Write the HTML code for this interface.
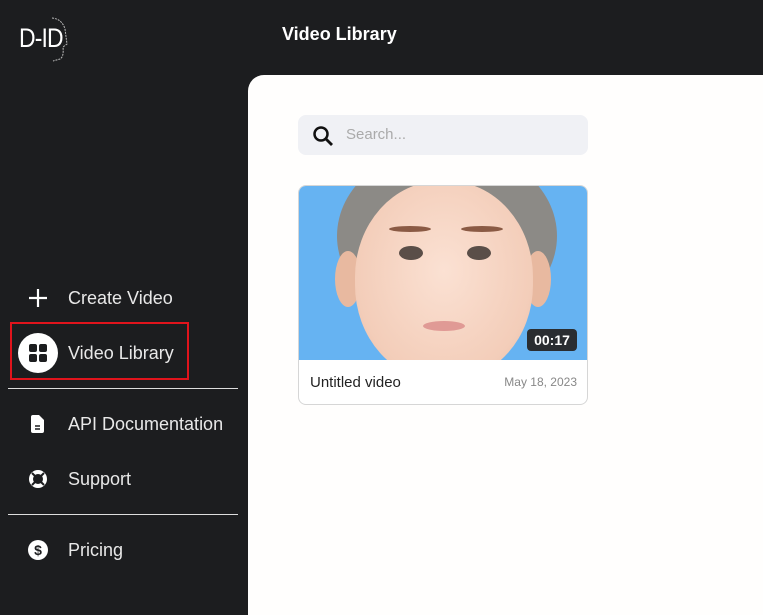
<!DOCTYPE html>
<html><head><style>
body{margin:0;width:763px;height:604px;background:#1c1d1f;font-family:"Liberation Sans",sans-serif;position:relative;overflow:hidden}
.t{position:absolute;color:#fff}
.nav{position:absolute;left:68px;color:#e8e8e8;font-size:18px}
.ic{position:absolute}
</style></head><body>
<div class="t" style="left:19px;top:23px;font-size:27px;font-family:'Liberation Sans Narrow','Liberation Sans',sans-serif;transform:scaleX(0.85);transform-origin:left;letter-spacing:-1px">D-ID</div>
<svg class="ic" style="left:50px;top:17px" width="22" height="46"><path d="M2 1 Q12 2 15 12 L17 27 L13 30 Q14 40 10 42 L3 44" fill="none" stroke="#bbb" stroke-width="1" stroke-dasharray="2 1"/></svg>
<div class="t" style="left:282px;top:24px;font-size:18px;font-weight:bold">Video Library</div>
<div style="position:absolute;left:248px;top:75px;width:520px;height:540px;background:#fffefd;border-top-left-radius:16px"></div>
<div style="position:absolute;left:298px;top:115px;width:290px;height:40px;background:#f0f1f5;border-radius:8px"></div>
<svg class="ic" style="left:311px;top:124px" width="24" height="24"><circle cx="10" cy="10" r="6.5" fill="none" stroke="#111" stroke-width="2.5"/><path d="M15 15 L21 21" stroke="#111" stroke-width="2.8"/></svg>
<div style="position:absolute;left:346px;top:126px;font-size:15px;color:#aaa">Search...</div>
<div style="position:absolute;left:298px;top:185px;width:288px;height:218px;border:1px solid #d6d6d6;border-radius:8px;overflow:hidden;background:#fff">
 <div style="position:absolute;left:0;top:0;width:288px;height:174px;background:#66b3f2;overflow:hidden">
  <div style="position:absolute;left:38px;top:-40px;width:220px;height:180px;border-radius:50%;background:#8c8a86"></div>
  <div style="position:absolute;left:36px;top:65px;width:26px;height:56px;border-radius:50%;background:#e8b9a0"></div>
  <div style="position:absolute;left:226px;top:65px;width:26px;height:56px;border-radius:50%;background:#e8b9a0"></div>
  <div style="position:absolute;left:56px;top:-5px;width:178px;height:200px;border-radius:48%;background:radial-gradient(ellipse at 50% 45%,#fbe1d3,#f3cdb9 70%,#e6b39c)"></div>
  <div style="position:absolute;left:100px;top:60px;width:24px;height:14px;border-radius:50%;background:#5a4e48"></div>
  <div style="position:absolute;left:168px;top:60px;width:24px;height:14px;border-radius:50%;background:#5a4e48"></div>
  <div style="position:absolute;left:90px;top:40px;width:42px;height:6px;border-radius:50%;background:#8a5a44"></div>
  <div style="position:absolute;left:162px;top:40px;width:42px;height:6px;border-radius:50%;background:#8a5a44"></div>
  <div style="position:absolute;left:124px;top:135px;width:42px;height:10px;border-radius:50%;background:#e09a95"></div>
  <div style="position:absolute;left:228px;top:143px;width:50px;height:22px;border-radius:4px;background:#2a2d31;color:#fff;font-weight:bold;font-size:14px;text-align:center;line-height:22px">00:17</div>
 </div>
 <div style="position:absolute;left:11px;top:188px;font-size:15px;color:#222">Untitled video</div>
 <div style="position:absolute;right:10px;top:189px;font-size:12px;color:#888">May 18, 2023</div>
</div>
<svg class="ic" style="left:27px;top:287px" width="22" height="22"><path d="M11 2V20M2 11H20" stroke="#fff" stroke-width="2.2"/></svg>
<div class="nav" style="top:288px">Create Video</div>
<div style="position:absolute;left:10px;top:322px;width:175px;height:54px;border:2px solid #e0141c"></div>
<div style="position:absolute;left:18px;top:333px;width:40px;height:40px;border-radius:50%;background:#fff"></div>
<svg class="ic" style="left:29px;top:344px" width="18" height="18"><rect x="0" y="0" width="8" height="8" rx="2" fill="#1c1d1f"/><rect x="10" y="0" width="8" height="8" rx="2" fill="#1c1d1f"/><rect x="0" y="10" width="8" height="8" rx="2" fill="#1c1d1f"/><rect x="10" y="10" width="8" height="8" rx="2" fill="#1c1d1f"/></svg>
<div class="nav" style="top:343px">Video Library</div>
<div style="position:absolute;left:8px;top:388px;width:230px;height:1px;background:#ddd"></div>
<svg class="ic" style="left:31px;top:415px" width="14" height="18"><path d="M0 2Q0 0 2 0H8L13 5V16Q13 18 11 18H2Q0 18 0 16Z" fill="#fff"/><path d="M4 11H9M4 14H9" stroke="#1c1d1f" stroke-width="1.5"/></svg>
<div class="nav" style="top:414px">API Documentation</div>
<svg class="ic" style="left:28px;top:469px" width="20" height="20"><circle cx="10" cy="10" r="7" fill="none" stroke="#fff" stroke-width="4"/><path d="M4 4L7 7M16 4L13 7M4 16L7 13M16 16L13 13" stroke="#1c1d1f" stroke-width="2"/></svg>
<div class="nav" style="top:469px">Support</div>
<div style="position:absolute;left:8px;top:514px;width:230px;height:1px;background:#ddd"></div>
<div style="position:absolute;left:28px;top:540px;width:20px;height:20px;border-radius:50%;background:#fff;color:#1c1d1f;font-weight:bold;font-size:14px;text-align:center;line-height:20px">$</div>
<div class="nav" style="top:540px">Pricing</div>
</body></html>
